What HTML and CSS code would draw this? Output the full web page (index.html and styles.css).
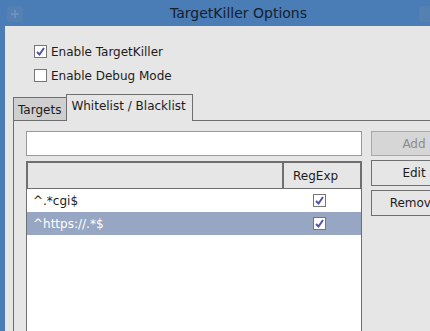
FILE: index.html
```html
<!DOCTYPE html>
<html lang="en">
<head>
    <meta charset="UTF-8">
    <title>TargetKiller Options</title>
    <link rel="stylesheet" href="styles.css">
</head>
<body>
    <div class="window">
        <div class="titlebar">
            <span class="win-icon">
                <svg width="16" height="16" viewBox="0 0 16 16"><path d="M8 4v8M4 8h8" stroke="#6b90bd" stroke-width="2"/></svg>
            </span>
            <span class="title">TargetKiller Options</span>
            <span class="win-btn"></span>
        </div>

        <div class="client">
            <label class="check-row">
                <span class="check">
                    <svg width="11" height="11" viewBox="0 0 11 11"><path d="M2 6l2.5 2.5L9 2" fill="none" stroke="#4b55b0" stroke-width="2"/></svg>
                </span>
                Enable TargetKiller
            </label>
            <label class="check-row">
                <span class="check"></span>
                Enable Debug Mode
            </label>

            <div class="tabs">
                <div class="tab">Targets</div>
                <div class="tab active">Whitelist / Blacklist</div>
                <div class="tab-fill"></div>
            </div>

            <div class="panel">
                <div class="panel-main">
                    <input class="pattern" type="text">
                    <div class="list">
                        <div class="list-head">
                            <div class="head-cell name"></div>
                            <div class="head-cell re">RegExp</div>
                        </div>
                        <div class="row">
                            <div class="cell name">^.*cgi$</div>
                            <div class="cell re">
                                <span class="check">
                                    <svg width="11" height="11" viewBox="0 0 11 11"><path d="M2 6l2.5 2.5L9 2" fill="none" stroke="#4b55b0" stroke-width="2"/></svg>
                                </span>
                            </div>
                        </div>
                        <div class="row selected">
                            <div class="cell name">^https://.*$</div>
                            <div class="cell re">
                                <span class="check">
                                    <svg width="11" height="11" viewBox="0 0 11 11"><path d="M2 6l2.5 2.5L9 2" fill="none" stroke="#4b55b0" stroke-width="2"/></svg>
                                </span>
                            </div>
                        </div>
                    </div>
                </div>
                <div class="buttons">
                    <button class="btn" disabled>Add</button>
                    <button class="btn">Edit</button>
                    <button class="btn">Remove</button>
                </div>
            </div>
        </div>
    </div>
</body>
</html>
```

FILE: styles.css
```css
body {
    margin: 0;
    font-family: "DejaVu Sans", sans-serif;
    font-size: 12px;
    color: #1c1c1c;
}
.window {
    width: 430px;
    height: 331px;
    overflow: hidden;
    display: flex;
    flex-direction: column;
    background: #4a7cb5;
}
.titlebar {
    height: 26px;
    flex-shrink: 0;
    display: flex;
    align-items: center;
    padding-left: 7px;
}
.win-icon {
    width: 16px;
    height: 16px;
    border-radius: 3px;
    background: #5580b2;
    display: flex;
    margin-top: 1px;
}
.title {
    margin-left: 147px;
    font-size: 14px;
    color: #14202e;
}
.win-btn {
    margin-left: auto;
    margin-right: -6px;
    width: 17px;
    height: 16px;
    border-radius: 3px;
    background: #5580b2;
    margin-top: 1px;
}
.client {
    flex: 1;
    margin-left: 5px;
    background: #e6e6e6;
    padding-top: 19px;
    display: flex;
    flex-direction: column;
    min-width: 0;
}
.check-row {
    display: flex;
    align-items: center;
    gap: 4px;
    height: 13px;
    padding-left: 29px;
    margin-bottom: 11px;
}
.check {
    width: 11px;
    height: 11px;
    border: 1px solid #767676;
    background: #fff;
    display: flex;
    align-items: center;
    justify-content: center;
}
.tabs {
    display: flex;
    align-items: flex-end;
    height: 27px;
    margin-top: 1px;
    padding-left: 8px;
}
.tab {
    height: 24px;
    padding: 1px 5px 0 4px;
    border: 1px solid #6f6f6f;
    border-right: none;
    background: #cfcfcf;
    display: flex;
    align-items: center;
    box-sizing: border-box;
}
.tab.active {
    height: 27px;
    padding: 4px 6px 0 4px;
    border-right: 1px solid #6f6f6f;
    border-bottom: none;
    background: #e6e6e6;
    align-items: flex-start;
}
.tab-fill {
    flex: 1;
    border-bottom: 1px solid #6f6f6f;
}
.panel {
    flex: 1;
    margin-left: 8px;
    border-left: 1px solid #6f6f6f;
    padding: 10px 0 0 12px;
    display: flex;
    gap: 9px;
}
.panel-main {
    width: 336px;
    flex-shrink: 0;
    display: flex;
    flex-direction: column;
    gap: 5px;
}
.pattern {
    height: 25px;
    box-sizing: border-box;
    border: 1px solid #9a9a9a;
    background: #fff;
    margin: 0;
    font: inherit;
}
.list {
    height: 200px;
    border: 1px solid #6f6f6f;
    background: #fff;
}
.list-head {
    display: flex;
    height: 27px;
}
.head-cell {
    border: 1px solid #6f6f6f;
    background: #e6e6e6;
    display: flex;
    align-items: center;
}
.head-cell.name {
    width: 256px;
    box-sizing: border-box;
}
.head-cell.re {
    flex: 1;
    padding-left: 9px;
}
.row {
    display: flex;
    height: 23px;
    align-items: center;
}
.row.selected {
    background: #97a6c3;
    color: #fff;
}
.cell.name {
    width: 256px;
    padding-left: 6px;
    box-sizing: border-box;
}
.cell.re {
    padding-left: 30px;
    display: flex;
}
.buttons {
    flex-shrink: 0;
    display: flex;
    flex-direction: column;
    gap: 4px;
}
.btn {
    width: 86px;
    height: 26px;
    border: 1px solid #6f6f6f;
    background: #e6e6e6;
    font: inherit;
    color: #1c1c1c;
    padding: 0;
    margin: 0;
}
.btn:disabled {
    height: 25px;
    background: #d6d6d6;
    border-color: #a8a8a8;
    color: #8c8c8c;
}
```
